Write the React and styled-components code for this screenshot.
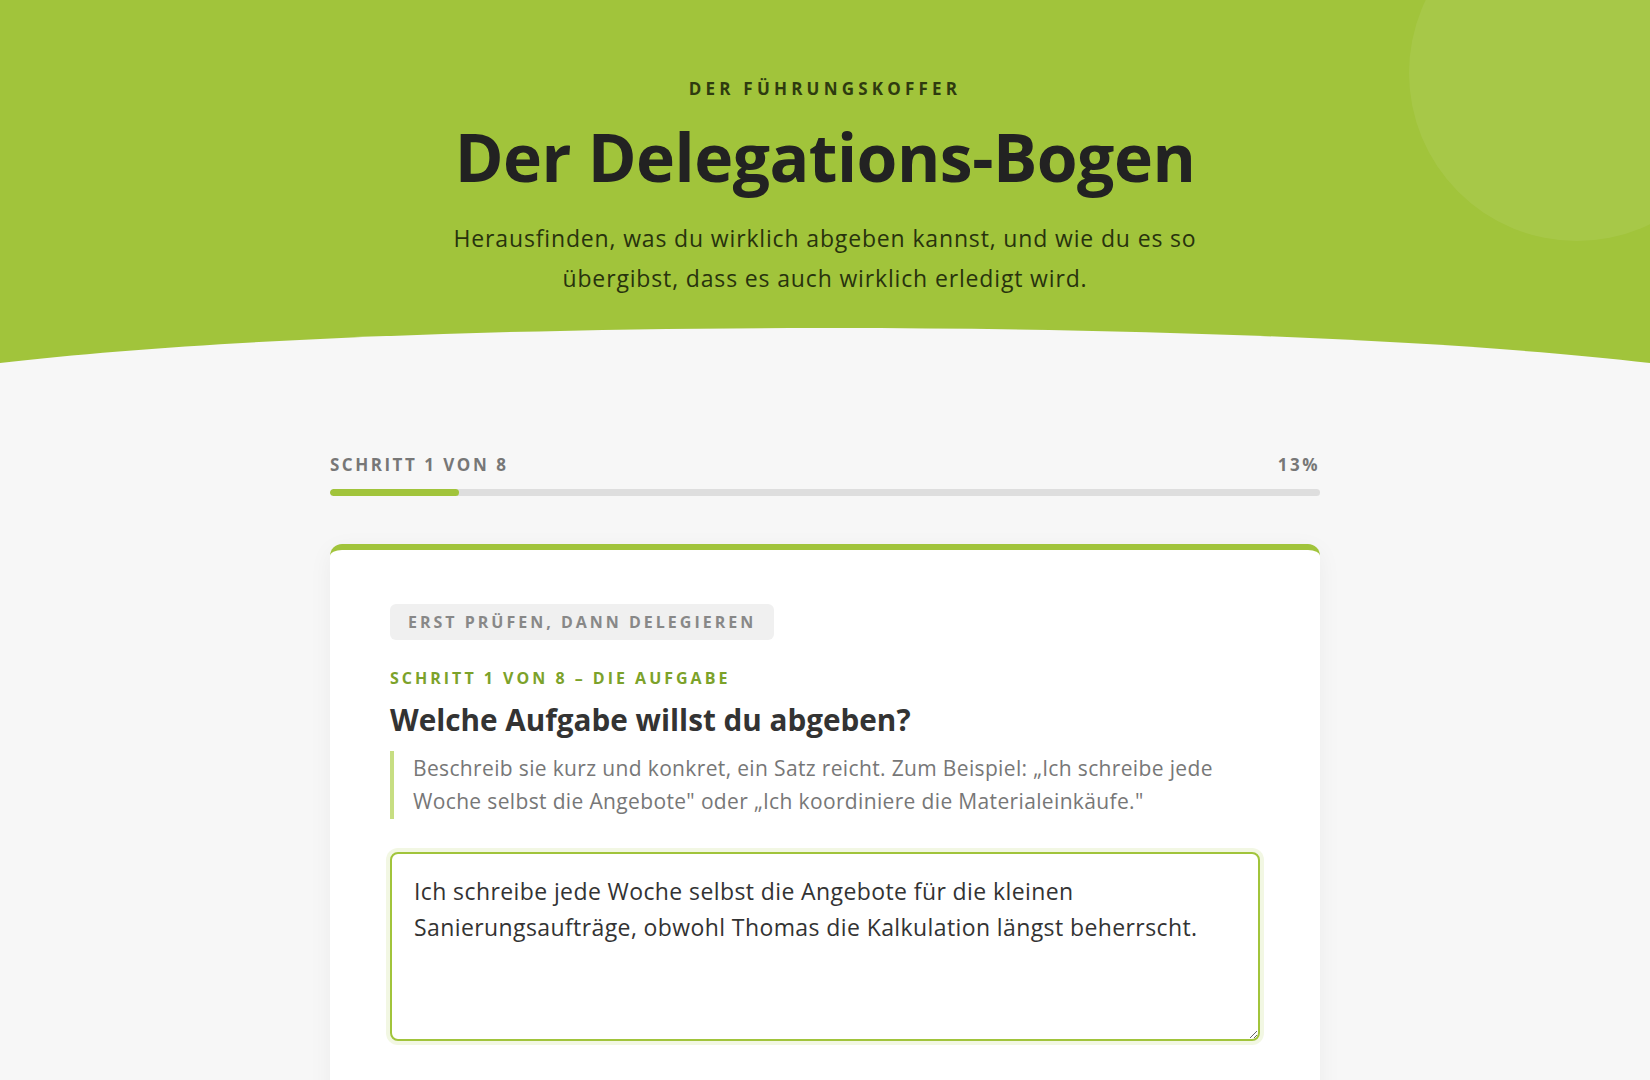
import React from "react";
import styled, { createGlobalStyle } from "styled-components";

const GREEN = "#a1c43b";

const GlobalStyle = createGlobalStyle`
  * { box-sizing: border-box; }
  body {
    margin: 0;
    background: #f7f7f7;
    font-family: "Open Sans", "Noto Sans", sans-serif;
    color: #333;
  }
`;

const Hero = styled.header`
  position: relative;
  overflow: hidden;
  background: ${GREEN};
  text-align: center;
`;

const Bubble = styled.div`
  position: absolute;
  top: -95px;
  right: -95px;
  width: 336px;
  height: 336px;
  border-radius: 50%;
  background: rgba(255, 255, 255, 0.07);
`;

const HeroInner = styled.div`
  position: relative;
  padding: 78px 20px 30px;
  display: flex;
  flex-direction: column;
  align-items: center;
`;

const Eyebrow = styled.div`
  font-size: 17px;
  font-weight: 700;
  letter-spacing: 4.2px;
  line-height: 22px;
  text-transform: uppercase;
  color: #2e3b0f;
`;

const Title = styled.h1`
  margin: 18px 0 0;
  font-size: 66px;
  line-height: 76px;
  font-weight: 700;
  letter-spacing: -0.5px;
  color: #222;
`;

const Subtitle = styled.p`
  margin: 24px 0 0;
  max-width: 790px;
  font-size: 23px;
  line-height: 40px;
  letter-spacing: 0.85px;
  color: #28330d;
`;

const Wave = styled.svg`
  display: block;
  width: 100%;
  height: 35px;
`;

const Main = styled.main`
  max-width: 990px;
  margin: 0 auto;
  padding-top: 92px;
`;

const ProgressHead = styled.div`
  display: flex;
  justify-content: space-between;
  align-items: center;
  font-size: 17px;
  line-height: 20px;
  font-weight: 700;
  letter-spacing: 2.5px;
  color: #777;
`;

const Track = styled.div`
  margin-top: 14px;
  height: 7px;
  border-radius: 4px;
  background: #dedede;
  overflow: hidden;
`;

const Fill = styled.div`
  height: 100%;
  border-radius: 4px;
  background: ${GREEN};
`;

const Card = styled.section`
  margin-top: 48px;
  background: #fff;
  border-top: 6px solid ${GREEN};
  border-radius: 12px;
  box-shadow: 0 6px 24px rgba(0, 0, 0, 0.05);
  padding: 54px 60px 80px;
`;

const Tag = styled.span`
  display: inline-block;
  padding: 8px 18px;
  border-radius: 6px;
  background: #f0f0f0;
  font-size: 16px;
  line-height: 20px;
  font-weight: 700;
  letter-spacing: 3px;
  text-transform: uppercase;
  color: #888;
`;

const StepLabel = styled.div`
  margin-top: 28px;
  font-size: 16px;
  line-height: 20px;
  font-weight: 700;
  letter-spacing: 3px;
  text-transform: uppercase;
  color: #7ca22a;
`;

const Question = styled.h2`
  margin: 14px 0 0;
  font-size: 29.7px;
  line-height: 36px;
  font-weight: 700;
  color: #333;
`;

const Hint = styled.blockquote`
  margin: 13px 0 0;
  padding: 1px 0 1px 19px;
  border-left: 4px solid #c7de82;
  font-size: 21px;
  line-height: 33px;
  letter-spacing: 0.35px;
  color: #777;
`;

const Answer = styled.textarea`
  display: block;
  margin-top: 33px;
  width: 100%;
  height: 189px;
  padding: 19px 22px;
  border: 2px solid ${GREEN};
  border-radius: 8px;
  box-shadow: 0 0 0 4px rgba(161, 196, 59, 0.14);
  outline: none;
  resize: vertical;
  font-family: inherit;
  font-size: 23px;
  line-height: 36px;
  letter-spacing: 0.4px;
  color: #333;
  background: #fff;
`;

export default function App() {
  const step = 1;
  const total = 8;
  const pct = Math.round((step / total) * 100);
  return (
    <>
      <GlobalStyle />
      <Hero>
        <Bubble />
        <HeroInner>
          <Eyebrow>Der Führungskoffer</Eyebrow>
          <Title>Der Delegations-Bogen</Title>
          <Subtitle>
            Herausfinden, was du wirklich abgeben kannst, und wie du es so
            übergibst, dass es auch wirklich erledigt wird.
          </Subtitle>
        </HeroInner>
        <Wave viewBox="0 0 1650 35" preserveAspectRatio="none">
          <path d="M0,35 C400,-11.67 1250,-11.67 1650,35 Z" fill="#f7f7f7" />
        </Wave>
      </Hero>
      <Main>
        <ProgressHead>
          <span>SCHRITT {step} VON {total}</span>
          <span>{pct}%</span>
        </ProgressHead>
        <Track>
          <Fill style={{ width: `${pct}%` }} />
        </Track>
        <Card>
          <Tag>Erst prüfen, dann delegieren</Tag>
          <StepLabel>Schritt 1 von 8 – Die Aufgabe</StepLabel>
          <Question>Welche Aufgabe willst du abgeben?</Question>
          <Hint>
            Beschreib sie kurz und konkret, ein Satz reicht. Zum Beispiel: „Ich
            schreibe jede Woche selbst die Angebote" oder „Ich koordiniere die
            Materialeinkäufe."
          </Hint>
          <Answer
            defaultValue="Ich schreibe jede Woche selbst die Angebote für die kleinen Sanierungsaufträge, obwohl Thomas die Kalkulation längst beherrscht."
          />
        </Card>
      </Main>
    </>
  );
}
